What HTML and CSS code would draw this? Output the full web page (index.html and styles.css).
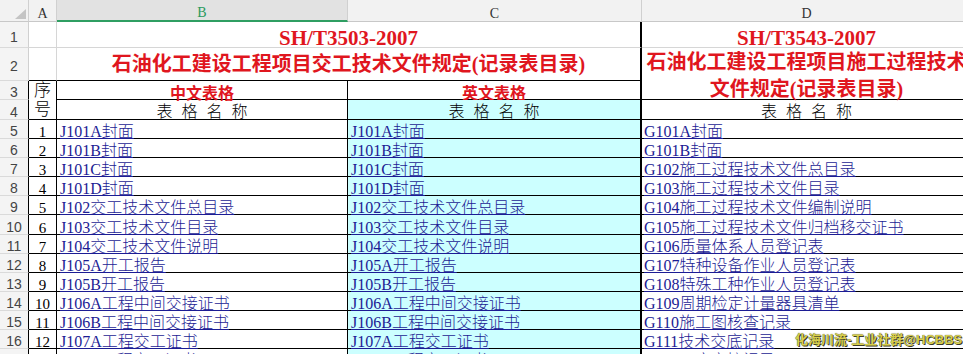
FILE: index.html
```html
<!DOCTYPE html>
<html lang="zh-CN">
<head>
<meta charset="utf-8">
<title>记录表目录</title>
<link rel="stylesheet" href="styles.css">
</head>
<body>
<div class="sheet">
  <div class="corner"><svg width="11" height="10" viewBox="0 0 11 10"><polygon points="11,0 11,10 0,10" fill="#c4c4c4"/></svg></div>
  <div class="ch">A</div>
  <div class="ch sel">B</div>
  <div class="ch">C</div>
  <div class="ch">D</div>

  <div class="rh">1</div>
  <div class="c"></div>
  <div class="c title1 span2 thick">SH/T3503-2007</div>
  <div class="c title1">SH/T3543-2007</div>

  <div class="rh">2</div>
  <div class="c edge"></div>
  <div class="c title2 span2 thick edge">石油化工建设工程项目交工技术文件规定(记录表目录)</div>
  <div class="c title2d edge">石油化工建设工程项目施工过程技术文件规定(记录表目录)</div>

  <div class="rh t">3</div>
  <div class="c t seq">序号</div>
  <div class="c t sub">中文表格</div>
  <div class="c t sub thick">英文表格</div>

  <div class="rh t">4</div>
  <div class="c t hd">表 格 名 称</div>
  <div class="c t hd cyan thick">表 格 名 称</div>
  <div class="c t hd">表 格 名 称</div>

  <div class="rh t">5</div><div class="c t num">1</div><div class="c t item">J101A封面</div><div class="c t item cyan thick">J101A封面</div><div class="c t item d">G101A封面</div>
  <div class="rh t">6</div><div class="c t num">2</div><div class="c t item">J101B封面</div><div class="c t item cyan thick">J101B封面</div><div class="c t item d">G101B封面</div>
  <div class="rh t">7</div><div class="c t num">3</div><div class="c t item">J101C封面</div><div class="c t item cyan thick">J101C封面</div><div class="c t item d">G102施工过程技术文件总目录</div>
  <div class="rh t">8</div><div class="c t num">4</div><div class="c t item">J101D封面</div><div class="c t item cyan thick">J101D封面</div><div class="c t item d">G103施工过程技术文件目录</div>
  <div class="rh t">9</div><div class="c t num">5</div><div class="c t item">J102交工技术文件总目录</div><div class="c t item cyan thick">J102交工技术文件总目录</div><div class="c t item d">G104施工过程技术文件编制说明</div>
  <div class="rh t">10</div><div class="c t num">6</div><div class="c t item">J103交工技术文件目录</div><div class="c t item cyan thick">J103交工技术文件目录</div><div class="c t item d">G105施工过程技术文件归档移交证书</div>
  <div class="rh t">11</div><div class="c t num">7</div><div class="c t item">J104交工技术文件说明</div><div class="c t item cyan thick">J104交工技术文件说明</div><div class="c t item d">G106质量体系人员登记表</div>
  <div class="rh t">12</div><div class="c t num">8</div><div class="c t item">J105A开工报告</div><div class="c t item cyan thick">J105A开工报告</div><div class="c t item d">G107特种设备作业人员登记表</div>
  <div class="rh t">13</div><div class="c t num">9</div><div class="c t item">J105B开工报告</div><div class="c t item cyan thick">J105B开工报告</div><div class="c t item d">G108特殊工种作业人员登记表</div>
  <div class="rh t">14</div><div class="c t num">10</div><div class="c t item">J106A工程中间交接证书</div><div class="c t item cyan thick">J106A工程中间交接证书</div><div class="c t item d">G109周期检定计量器具清单</div>
  <div class="rh t">15</div><div class="c t num">11</div><div class="c t item">J106B工程中间交接证书</div><div class="c t item cyan thick">J106B工程中间交接证书</div><div class="c t item d">G110施工图核查记录</div>
  <div class="rh t">16</div><div class="c t num">12</div><div class="c t item">J107A工程交工证书</div><div class="c t item cyan thick">J107A工程交工证书</div><div class="c t item d">G111技术交底记录</div>
  <div class="rh t">17</div><div class="c t num">13</div><div class="c t item">J107B工程交工证书</div><div class="c t item cyan thick">J107B工程交工证书</div><div class="c t item d">G112工序交接记录</div>
</div>
<div class="mark">化海川流-工业社群@HCBBS</div>
</body>
</html>
```

FILE: styles.css
```css
* { box-sizing: border-box; }

body {
  margin: 0;
  width: 963px;
  height: 354px;
  overflow: hidden;
  position: relative;
  background: #fff;
  font-family: "Liberation Serif", "Noto Sans CJK SC", serif;
  color: #000;
}

.sheet {
  display: grid;
  grid-template-columns: 29px 28px 291px 294px 330px;
  grid-template-rows: 22px 26px 33px 19px 20px repeat(13, 19.1px);
  width: 972px;
}

.corner {
  background: #f2f2f2;
  border-right: 1px solid #d0d0d0;
  border-bottom: 1px solid #c8c8c8;
  padding: 9px 0 0 15px;
}
.corner svg { display: block; }

.ch {
  background: #f2f2f2;
  border-right: 1px solid #d0d0d0;
  border-bottom: 1px solid #c8c8c8;
  display: flex;
  align-items: flex-end;
  justify-content: center;
  font-size: 14px;
  line-height: 14px;
  color: #333;
}
.ch.sel {
  background: #e2e2e2;
  color: #2a9a5e;
  border-bottom: 2px solid #2f9e62;
}

.rh {
  background: #f4f4f4;
  border-right: 1px solid #d0d0d0;
  border-bottom: 1px solid #dadada;
  display: flex;
  align-items: center;
  justify-content: center;
  padding-top: 5px;
  font-family: "Liberation Sans", sans-serif;
  font-size: 14px;
  line-height: 15px;
  color: #444;
}
.rh.t { border-right-color: #000; }

.c {
  border-right: 1px solid #d6d6d6;
  border-bottom: 1px solid #d6d6d6;
  display: flex;
  white-space: nowrap;
  min-width: 0;
}
.c.t { border-right-color: #000; border-bottom-color: #000; }
.c.edge { border-bottom-color: #000; }
.c.thick { border-right: 2px solid #000; }
.span2 { grid-column: span 2; }
.cyan { background: #ccffff; }

.title1 {
  justify-content: center;
  align-items: flex-end;
  color: #e0161e;
  font-weight: bold;
  font-size: 21px;
  line-height: 18px;
}

.title2 {
  justify-content: center;
  align-items: center;
  color: #e0161e;
  font-weight: bold;
  font-size: 20px;
  line-height: 26px;
}

.title2d {
  grid-row: span 2;
  white-space: normal;
  text-align: center;
  justify-content: center;
  align-items: center;
  padding-top: 4px;
  color: #e0161e;
  font-weight: bold;
  font-size: 20px;
  line-height: 27px;
}

.seq {
  grid-row: span 2;
  white-space: normal;
  text-align: center;
  justify-content: center;
  align-items: center;
  font-size: 17px;
  font-weight: 300;
  line-height: 19px;
}

.sub {
  justify-content: center;
  align-items: flex-end;
  color: #e0161e;
  font-weight: bold;
  font-size: 16px;
  line-height: 10px;
}

.hd {
  justify-content: center;
  align-items: flex-end;
  font-size: 16px;
  font-weight: 300;
  line-height: 14px;
  word-spacing: 5px;
}

.num {
  justify-content: center;
  align-items: flex-end;
  font-size: 15px;
  line-height: 11px;
}

.item {
  align-items: flex-end;
  padding-left: 3px;
  font-size: 16px;
  font-weight: 300;
  line-height: 12px;
  color: #1c1c94;
  text-decoration: underline;
}
.item.d { padding-left: 2px; }

.mark {
  position: absolute;
  left: 795px;
  top: 332px;
  font-family: "Liberation Sans", "Noto Sans CJK SC", sans-serif;
  font-weight: bold;
  font-size: 13px;
  line-height: 15px;
  color: #d8ce4c;
  text-shadow: 1px 1px 0 #3c3c28, 0 0 1px #3c3c28;
  white-space: nowrap;
}
```
